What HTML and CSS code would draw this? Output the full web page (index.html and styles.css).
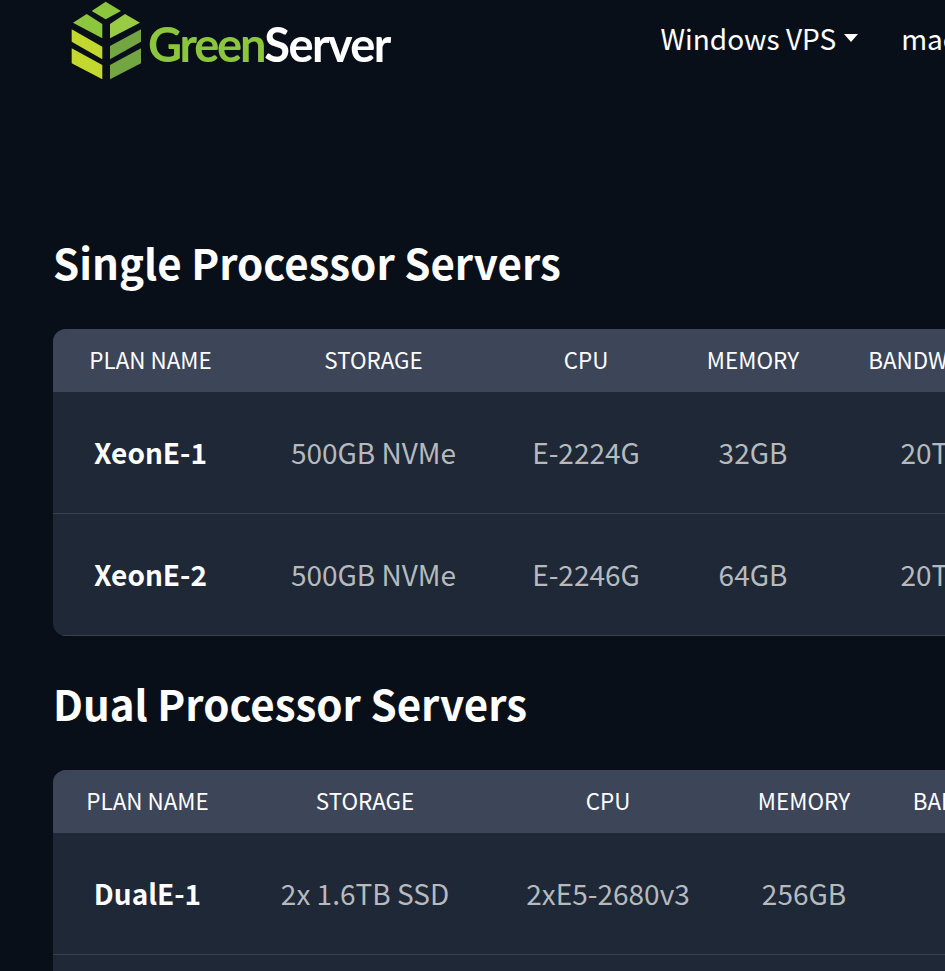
FILE: index.html
```html
<!DOCTYPE html>
<html lang="en">
<head>
<meta charset="utf-8">
<title>GreenServer</title>
<link rel="stylesheet" href="styles.css">
</head>
<body>
<header class="topbar">
  <a class="logo" href="#">
    <svg class="logo-mark" viewBox="0 0 255 255" width="85" height="85" aria-hidden="true">
      <polygon fill="#8cc63f" points="122,5 168,33 122,58 80,33"/>
      <polygon fill="#8cc63f" points="65,42 112,72 112,115 24,68"/>
      <polygon fill="#99cc44" points="180,42 225,68 135,115 135,72"/>
      <polygon fill="#c3d82e" points="20,88 112,140 112,178 20,125"/>
      <polygon fill="#c3d82e" points="20,145 112,195 112,238 20,190"/>
      <polygon fill="#74a543" points="228,88 228,125 135,178 135,138"/>
      <polygon fill="#74a543" points="228,145 228,190 135,238 135,195"/>
    </svg>
    <span class="logo-text"><span class="logo-green">Green</span>Server</span>
  </a>
  <nav class="nav">
    <a class="nav-link" href="#">Windows VPS<span class="caret"></span></a>
    <a class="nav-link" href="#">macOS VPS</a>
  </nav>
</header>
<main class="content">
  <h2 class="title title-first">Single Processor Servers</h2>
  <div class="plan-card">
    <table class="plans plans-single">
      <colgroup><col class="c1"><col class="c2"><col class="c3"><col class="c4"><col class="c5"></colgroup>
      <thead><tr><th>PLAN NAME</th><th>STORAGE</th><th>CPU</th><th>MEMORY</th><th>BANDWIDTH</th></tr></thead>
      <tbody>
        <tr><td class="name">XeonE-1</td><td>500GB NVMe</td><td>E-2224G</td><td>32GB</td><td>20TB</td></tr>
        <tr><td class="name">XeonE-2</td><td>500GB NVMe</td><td>E-2246G</td><td>64GB</td><td>20TB</td></tr>
      </tbody>
    </table>
  </div>
  <h2 class="title title-second">Dual Processor Servers</h2>
  <div class="plan-card">
    <table class="plans plans-dual">
      <colgroup><col class="c1"><col class="c2"><col class="c3"><col class="c4"><col class="c5"></colgroup>
      <thead><tr><th>PLAN NAME</th><th>STORAGE</th><th>CPU</th><th>MEMORY</th><th>BANDWIDTH</th></tr></thead>
      <tbody>
        <tr><td class="name">DualE-1</td><td>2x 1.6TB SSD</td><td>2xE5-2680v3</td><td>256GB</td><td>20TB</td></tr>
        <tr><td class="name">DualE-2</td><td></td><td></td><td></td><td></td></tr>
      </tbody>
    </table>
  </div>
</main>
</body>
</html>
```
FILE: styles.css
```css
html, body {
  margin: 0;
  padding: 0;
  height: 971px;
  overflow: hidden;
  background: #090f19;
}
body {
  font-family: "Noto Sans CJK SC", "Noto Sans", sans-serif;
  color: #fff;
}
a { color: inherit; text-decoration: none; }

.topbar {
  display: flex;
  align-items: flex-start;
  height: 85px;
  width: 1100px;
  padding-left: 65px;
  box-sizing: border-box;
}
.logo {
  display: flex;
  align-items: flex-start;
  width: 595.5px;
}
.logo-mark {
  flex: none;
  filter: blur(0.4px);
}
.logo-text {
  font-family: "Lato", sans-serif;
  font-weight: 700;
  font-size: 47px;
  line-height: 46px;
  margin: 21px 0 0 -2px;
  letter-spacing: -1.6px;
  filter: blur(0.5px);
}
.logo-green {
  color: #8cc63f;
  letter-spacing: -2.2px;
}

.nav {
  display: flex;
  gap: 43px;
  font-size: 28px;
  line-height: 40px;
  padding-top: 18px;
}
.nav-link {
  display: flex;
  align-items: center;
  white-space: nowrap;
}
.caret {
  width: 0;
  height: 0;
  margin-left: 8px;
  border-top: 8px solid #fff;
  border-left: 7.5px solid transparent;
  border-right: 7.5px solid transparent;
}

.content {
  padding-left: 53px;
  width: 1300px;
}
.title {
  margin: 0;
  font-size: 42px;
  font-weight: 700;
  line-height: 58px;
}
.title-first { padding-top: 148px; padding-bottom: 38px; }
.title-second { padding-top: 38px; padding-bottom: 38px; }

.plan-card {
  width: 1200px;
  border-radius: 13px;
  overflow: hidden;
  background: #1e2836;
}
.plans {
  border-collapse: separate;
  border-spacing: 0;
  table-layout: fixed;
}
.plans-single { width: 981px; }
.plans-dual { width: 1023px; }
.plans th {
  height: 63px;
  padding: 0 0 4px;
  box-sizing: border-box;
  background: #3d4559;
  font-size: 22.4px;
  font-weight: 400;
  text-align: center;
  white-space: nowrap;
}
.plans td {
  height: 122px;
  padding: 0 0 2px;
  box-sizing: border-box;
  border-bottom: 1px solid #3a4148;
  font-size: 28px;
  color: #b6babe;
  text-align: center;
  white-space: nowrap;
}
.plans td.name {
  color: #fff;
  font-weight: 700;
}
.plans-single .c1 { width: 195px; }
.plans-single .c2 { width: 251px; }
.plans-single .c3 { width: 174px; }
.plans-single .c4 { width: 160px; }
.plans-single .c5 { width: 201px; }
.plans-dual .c1 { width: 189px; }
.plans-dual .c2 { width: 246px; }
.plans-dual .c3 { width: 240px; }
.plans-dual .c4 { width: 152px; }
.plans-dual .c5 { width: 196px; }
```
